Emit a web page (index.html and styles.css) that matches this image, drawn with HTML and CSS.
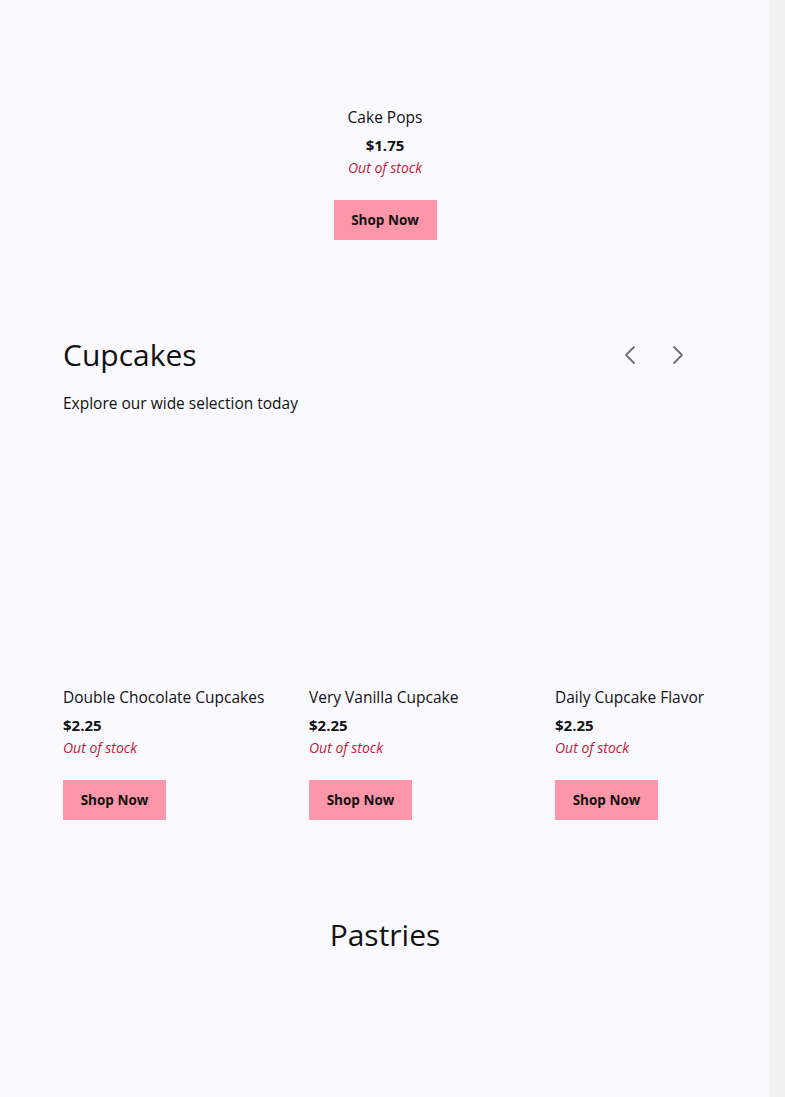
FILE: index.html
```html
<!DOCTYPE html>
<html lang="en">
<head>
<meta charset="utf-8">
<title>Shop</title>
<link rel="stylesheet" href="styles.css">
</head>
<body>
<div class="page">
  <main class="main">
    <section class="featured">
      <div class="card card-center">
        <h3 class="card-title">Cake Pops</h3>
        <p class="card-price">$1.75</p>
        <p class="card-stock">Out of stock</p>
        <a class="btn" href="#">Shop Now</a>
      </div>
    </section>

    <section class="category">
      <div class="category-head">
        <h2 class="category-title">Cupcakes</h2>
        <div class="arrows">
          <button class="arrow" aria-label="Previous">
            <svg width="12" height="20" viewBox="0 0 12 20"><path d="M10 2 L2 10 L10 18" fill="none" stroke="#6f6f6f" stroke-width="1.8" stroke-linecap="round" stroke-linejoin="round"/></svg>
          </button>
          <button class="arrow" aria-label="Next">
            <svg width="12" height="20" viewBox="0 0 12 20"><path d="M2 2 L10 10 L2 18" fill="none" stroke="#6f6f6f" stroke-width="1.8" stroke-linecap="round" stroke-linejoin="round"/></svg>
          </button>
        </div>
      </div>
      <p class="category-sub">Explore our wide selection today</p>
      <div class="track">
        <div class="card">
          <div class="card-img"></div>
          <h3 class="card-title">Double Chocolate Cupcakes</h3>
          <p class="card-price">$2.25</p>
          <p class="card-stock">Out of stock</p>
          <a class="btn" href="#">Shop Now</a>
        </div>
        <div class="card">
          <div class="card-img"></div>
          <h3 class="card-title">Very Vanilla Cupcake</h3>
          <p class="card-price">$2.25</p>
          <p class="card-stock">Out of stock</p>
          <a class="btn" href="#">Shop Now</a>
        </div>
        <div class="card">
          <div class="card-img"></div>
          <h3 class="card-title">Daily Cupcake Flavor</h3>
          <p class="card-price">$2.25</p>
          <p class="card-stock">Out of stock</p>
          <a class="btn" href="#">Shop Now</a>
        </div>
      </div>
    </section>

    <section class="category category-centered">
      <h2 class="category-title">Pastries</h2>
    </section>
  </main>
  <div class="scrollbar"></div>
</div>
</body>
</html>
```

FILE: styles.css
```css
* { box-sizing: border-box; }
html, body { margin: 0; padding: 0; }
body {
  font-family: "Open Sans", "Noto Sans", sans-serif;
  color: #111;
  background: #f9f9fe;
  overflow: hidden;
}
.page {
  display: flex;
  width: 785px;
  height: 1097px;
  overflow: hidden;
}
.main {
  width: 770px;
  flex: 0 0 770px;
  background: #f9f9fe;
  overflow: hidden;
}
.scrollbar {
  flex: 0 0 15px;
  background: #f1f1f1;
  border-left: 1px solid #ececec;
}
.featured {
  padding-top: 105px;
  display: flex;
  justify-content: center;
}
.card {
  flex: 0 0 222px;
  display: flex;
  flex-direction: column;
  align-items: flex-start;
}
.card-center { align-items: center; }
.card-img {
  width: 222px;
  height: 222px;
  margin-bottom: 18px;
}
.card-title {
  margin: 0;
  font-size: 15.5px;
  font-weight: 400;
  line-height: 24px;
  white-space: nowrap;
}
.card-price {
  margin: 4px 0 0;
  font-size: 15px;
  font-weight: 700;
  line-height: 24px;
}
.card-stock {
  margin: 1px 0 0;
  font-size: 14px;
  font-style: italic;
  line-height: 20px;
  color: #c41a34;
}
.btn {
  margin-top: 22px;
  display: inline-flex;
  align-items: center;
  justify-content: center;
  height: 40px;
  width: 103px;
  background: #fd96a9;
  color: #111;
  font-size: 13.5px;
  font-weight: 700;
  text-decoration: none;
}
.category {
  margin: 96px 63px 0;
}
.category-head {
  display: flex;
  align-items: center;
  justify-content: space-between;
}
.category-title {
  margin: 0;
  font-size: 30px;
  font-weight: 400;
  line-height: 38px;
}
.arrows {
  display: flex;
  padding-right: 5px;
}
.arrow {
  width: 48px;
  height: 38px;
  border: 0;
  background: none;
  padding: 0;
  display: flex;
  align-items: center;
  justify-content: center;
}
.category-sub {
  margin: 17px 0 0;
  font-size: 15.5px;
  line-height: 24px;
}
.track {
  margin-top: 30px;
  display: flex;
  gap: 24px;
}
.category-centered {
  text-align: center;
}
```
